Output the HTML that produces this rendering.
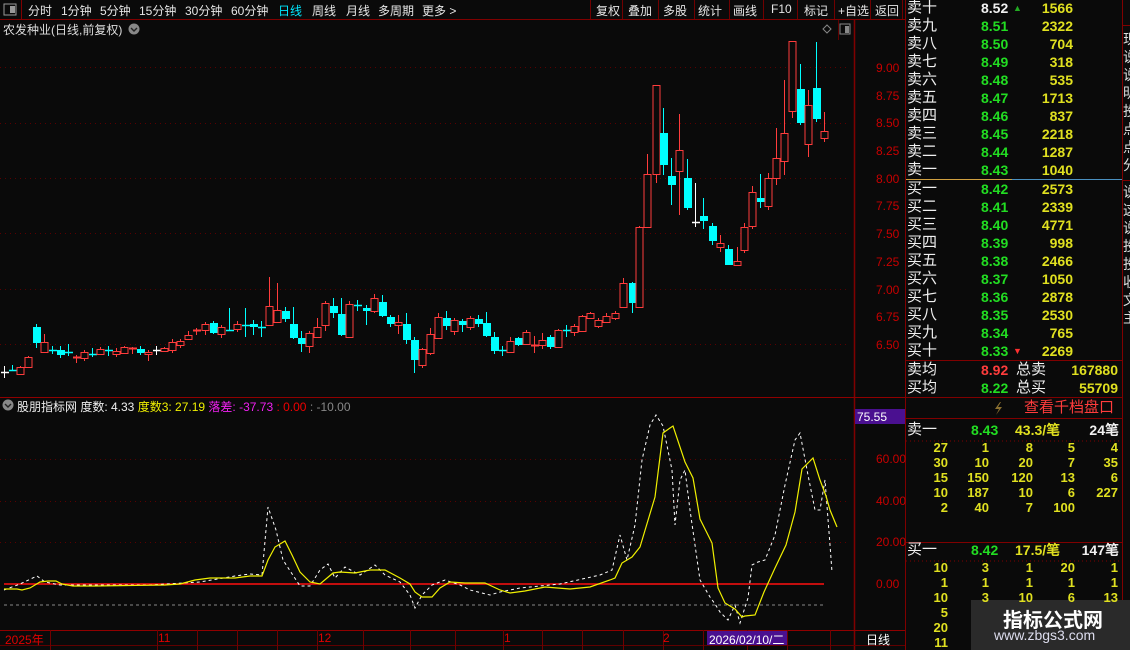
<!DOCTYPE html>
<html><head><meta charset="utf-8">
<style>
*{margin:0;padding:0;box-sizing:border-box}
body{width:1130px;height:650px;background:#0a0a0a;overflow:hidden;position:relative;font-family:"Liberation Sans","Noto Sans CJK SC",sans-serif;color:#ddd}
.a{position:absolute;white-space:nowrap}
.tb{font-size:12px;color:#e6e6e6;top:2px}
.rp{font-size:14px;line-height:18px}
.g{color:#22dd22}.y{color:#e0e020}.w{color:#f0f0f0}.r{color:#ff3c3c}
.ax{font-size:12px;color:#c80000;left:876px}
</style></head><body>
<svg class="a" style="left:0;top:0" width="1130" height="650" id="s">
<!-- frame lines -->
<line x1="0" y1="19.5" x2="905" y2="19.5" stroke="#800000"/>
<line x1="21.5" y1="0" x2="21.5" y2="19" stroke="#800000"/>
<line x1="854.5" y1="20" x2="854.5" y2="650" stroke="#800000" stroke-width="1.5"/>
<line x1="0" y1="397.5" x2="905" y2="397.5" stroke="#900000"/>
<line x1="0" y1="630.5" x2="905" y2="630.5" stroke="#900000"/>
<line x1="0" y1="645.5" x2="905" y2="645.5" stroke="#600000"/>
<line x1="905.5" y1="0" x2="905.5" y2="650" stroke="#800000"/>
<line x1="1122.5" y1="0" x2="1122.5" y2="650" stroke="#800000"/>
<line x1="838.5" y1="20" x2="838.5" y2="40" stroke="#600000"/>
<g stroke="#700000" id="tops"></g>
<!-- grids -->
<g stroke="#5a0000" stroke-dasharray="1,4" id="grid"></g>
<g id="candles"></g>
<line x1="4" y1="584" x2="824" y2="584" stroke="#ff1010" stroke-width="1.5"/>
<line x1="4" y1="605" x2="824" y2="605" stroke="#888" stroke-dasharray="3,3"/>
<polyline id="wl" fill="none" stroke="#fff" stroke-dasharray="3,3" stroke-width="1"/>
<polyline id="yl" fill="none" stroke="#f0f000" stroke-width="1.2"/>
<!-- right panel lines -->
<line x1="906" y1="179.5" x2="1012" y2="179.5" stroke="#d0a040"/>
<line x1="1012" y1="179.5" x2="1122" y2="179.5" stroke="#4a90c0"/>
<line x1="906" y1="360.5" x2="1122" y2="360.5" stroke="#800000"/>
<line x1="906" y1="397.5" x2="1122" y2="397.5" stroke="#800000"/>
<line x1="906" y1="418.5" x2="1122" y2="418.5" stroke="#800000"/>
<line x1="906" y1="441" x2="1122" y2="441" stroke="#800000" stroke-dasharray="1,3"/>
<line x1="906" y1="542.5" x2="1122" y2="542.5" stroke="#800000"/>
<line x1="906" y1="561" x2="1122" y2="561" stroke="#800000" stroke-dasharray="1,3"/>
<line x1="1122" y1="25.5" x2="1130" y2="25.5" stroke="#800000"/>
<line x1="1122" y1="180.5" x2="1130" y2="180.5" stroke="#800000"/>
<rect x="4" y="4" width="12" height="11" fill="none" stroke="#999"/><rect x="10" y="6" width="5" height="7" fill="#999"/>
<rect x="840" y="24" width="10" height="10" fill="none" stroke="#888"/><rect x="845" y="26" width="4" height="7" fill="#888"/>
<path d="M827 25 l4 4 l-4 4 l-4 -4z" fill="none" stroke="#888"/>
<circle cx="134" cy="29" r="5.5" fill="#888"/><path d="M131 28 l3 3 l3 -3" stroke="#222" fill="none" stroke-width="1.4"/>
<circle cx="8" cy="405" r="5.5" fill="#888"/><path d="M5 404 l3 3 l3 -3" stroke="#222" fill="none" stroke-width="1.4"/>
<rect x="855" y="409" width="50" height="15" fill="#4a1090"/>
<rect x="707" y="631" width="80" height="14" fill="#4a1090"/>
<path d="M1000 402 l-5 7 h4 l-3 6 l6 -8 h-4 l3 -5z" fill="#8a7030"/>
<rect x="971" y="600" width="159" height="50" fill="#2a2a2a"/>
</svg>

<div class="a tb" style="left:28px">分时</div>
<div class="a tb" style="left:61px">1分钟</div>
<div class="a tb" style="left:100px">5分钟</div>
<div class="a tb" style="left:139px">15分钟</div>
<div class="a tb" style="left:185px">30分钟</div>
<div class="a tb" style="left:231px">60分钟</div>
<div class="a tb" style="left:278px;color:#00e8ff">日线</div>
<div class="a tb" style="left:312px">周线</div>
<div class="a tb" style="left:346px">月线</div>
<div class="a tb" style="left:378px">多周期</div>
<div class="a tb" style="left:422px">更多 &gt;</div>
<div class="a tb" style="left:596px">复权</div>
<div class="a tb" style="left:628px">叠加</div>
<div class="a tb" style="left:663px">多股</div>
<div class="a tb" style="left:698px">统计</div>
<div class="a tb" style="left:733px">画线</div>
<div class="a tb" style="left:771px">F10</div>
<div class="a tb" style="left:804px">标记</div>
<div class="a tb" style="left:838px">+自选</div>
<div class="a tb" style="left:875px">返回</div>
<div class="a" style="left:3px;top:21px;font-size:12px;color:#ddd">农发种业(日线,前复权)</div>

<div class="a ax" style="top:61px">9.00</div>
<div class="a ax" style="top:89px">8.75</div>
<div class="a ax" style="top:116px">8.50</div>
<div class="a ax" style="top:144px">8.25</div>
<div class="a ax" style="top:172px">8.00</div>
<div class="a ax" style="top:199px">7.75</div>
<div class="a ax" style="top:227px">7.50</div>
<div class="a ax" style="top:255px">7.25</div>
<div class="a ax" style="top:283px">7.00</div>
<div class="a ax" style="top:310px">6.75</div>
<div class="a ax" style="top:338px">6.50</div>
<div class="a" style="left:857px;top:410px;font-size:12px;color:#fff">75.55</div>
<div class="a ax" style="top:452px">60.00</div>
<div class="a ax" style="top:494px">40.00</div>
<div class="a ax" style="top:535px">20.00</div>
<div class="a ax" style="top:577px">0.00</div>

<div class="a" style="left:17px;top:398px;font-size:12px"><span style="color:#eee">股朋指标网 度数: 4.33 </span><span style="color:#f0f000">度数3: 27.19 </span><span style="color:#f020f0">落差: -37.73 </span><span style="color:#f00000">: 0.00 </span><span style="color:#888">: -10.00</span></div>

<div class="a" style="left:5px;top:631px;font-size:12px;color:#e00000">2025年</div>
<div class="a" style="left:158px;top:631px;font-size:12px;color:#e00000">11</div>
<div class="a" style="left:318px;top:631px;font-size:12px;color:#e00000">12</div>
<div class="a" style="left:504px;top:631px;font-size:12px;color:#e00000">1</div>
<div class="a" style="left:663px;top:631px;font-size:12px;color:#e00000">2</div>
<div class="a" style="left:709px;top:631px;font-size:12px;color:#fff">2026/02/10/二</div>
<div class="a" style="left:866px;top:631px;font-size:12px;color:#fff">日线</div>

<div id="rp"></div>
<div class="a rp y" style="left:1123px;top:30px;width:7px;overflow:hidden;color:#ddd;line-height:18px;white-space:normal">现<br>说<br>说<br>明<br>投<br>点<br>点<br>分</div>
<div class="a rp" style="left:1123px;top:183px;width:7px;overflow:hidden;color:#ddd;line-height:18px;white-space:normal">说<br>这<br>说<br>投<br>投<br>收<br>文<br>主</div>

<div class="a" style="left:1003px;top:604px;font-size:20px;font-weight:bold;color:#fff">指标公式网</div>
<div class="a" style="left:994px;top:627px;font-size:14px;color:#dde">www.zbgs3.com</div>

<script>
var S='http://www.w3.org/2000/svg';
function el(p,t,a){var e=document.createElementNS(S,t);for(var k in a)e.setAttribute(k,a[k]);p.appendChild(e);return e;}
var g=document.getElementById('grid');
[67,123,178,233,289,344,459,501,542].forEach(function(y){el(g,'line',{x1:0,y1:y+.5,x2:850,y2:y+.5});});
var tp=document.getElementById('tops');
[590,622,658,694,729,763,797,834,870,902].forEach(function(x){el(tp,'line',{x1:x+.5,y1:0,x2:x+.5,y2:19});});
[50,157,197,237,277,317,363,410,455,503,542,582,623,663,703,747,787,830].forEach(function(x){el(tp,'line',{x1:x+.5,y1:630,x2:x+.5,y2:650});});
// candles: x, type(r red hollow, c cyan, w white, d red doji, e cyan doji), top, bottom, high, low
var C=[
[4,'w',372,372,366,378],[12,'e',370,370,365,371],[20,'r',367,374,366,375],[28,'r',357,367,356,368],
[36,'c',327,343,324,348],[44,'r',342,352,334,353],[52,'e',350,350,346,354],[60,'c',350,355,346,358],
[68,'e',352,352,344,356],[76,'d',357,358,355,363],[84,'r',352,358,350,361],[92,'e',354,354,348,357],
[100,'r',349,354,347,355],[108,'e',350,350,346,356],[116,'r',351,354,348,357],[124,'r',347,353,346,354],
[132,'d',348,349,347,354],[140,'c',349,353,346,355],[148,'r',352,354,350,361],[156,'w',350,350,346,355],
[164,'r',348,351,347,352],[172,'r',342,350,339,353],[180,'r',341,345,339,348],[188,'r',335,339,331,340],
[196,'d',330,331,328,335],[205,'r',324,330,322,335],[213,'c',323,333,321,334],[221,'r',327,334,325,338],
[229,'e',330,330,308,331],[237,'r',324,329,321,332],[245,'e',325,325,308,337],[253,'c',324,327,320,335],
[261,'e',327,327,321,337],[269,'r',306,325,277,326],[277,'r',310,322,283,323],[285,'c',311,319,307,322],
[293,'c',324,338,307,339],[301,'c',338,344,331,352],[309,'r',333,346,331,353],[317,'r',327,337,318,338],
[325,'r',303,325,301,331],[333,'c',306,313,298,318],[341,'c',314,335,298,336],[349,'r',304,337,301,338],
[357,'e',305,305,300,311],[366,'c',308,311,305,325],[374,'r',298,311,294,313],[382,'c',302,316,295,317],
[390,'c',317,324,315,327],[398,'r',322,325,315,334],[406,'c',324,340,313,344],[414,'c',340,360,337,373],
[422,'r',349,365,348,368],[430,'r',334,353,328,355],[438,'r',317,338,313,339],[446,'c',318,326,311,330],
[454,'r',320,331,318,335],[462,'c',321,325,319,332],[470,'r',318,327,316,330],[478,'c',319,324,315,327],
[486,'c',323,336,312,337],[494,'c',337,351,332,354],[502,'e',350,350,346,356],[510,'r',341,352,337,353],
[518,'c',338,345,337,346],[526,'r',332,344,330,345],[534,'d',345,346,336,353],[542,'r',340,345,333,349],
[550,'c',337,347,335,349],[558,'r',330,347,329,348],[566,'e',330,330,325,337],[574,'r',326,332,324,336],
[582,'r',316,331,315,332],[590,'r',313,318,312,319],[598,'r',320,326,318,328],[606,'r',316,322,313,323],
[615,'r',313,318,311,320],[623,'r',283,307,278,308],[632,'c',283,303,282,313],[639,'r',227,307,226,308],
[647,'r',174,227,154,228],[656,'r',85,174,85,183],[663,'c',133,165,108,175],[671,'c',176,185,158,205],
[679,'r',150,171,114,215],[687,'c',178,208,159,210],[695,'w',222,222,183,227],[703,'c',216,221,198,229],
[712,'c',226,241,223,245],[720,'r',243,247,235,252],[728,'c',249,265,245,265],[737,'r',261,265,247,266],
[744,'r',227,250,223,253],[752,'r',192,226,186,229],[760,'c',198,202,174,208],[768,'r',178,206,173,210],
[776,'r',158,178,128,185],[784,'r',133,161,80,175],[792,'r',41,111,41,118],[800,'c',89,123,64,125],
[808,'r',105,144,90,157],[816,'c',88,119,42,122],[824,'r',131,138,112,142]];
var cg=document.getElementById('candles');
C.forEach(function(c){var x=c[0],t=c[1],top=c[2],bot=c[3],hi=c[4],lo=c[5];
 var col=(t=='r'||t=='d')?'#ff3c3c':(t=='w'?'#ffffff':'#00ffff');
 el(cg,'line',{x1:x+.5,y1:hi,x2:x+.5,y2:lo,stroke:col});
 if(t=='r'){el(cg,'rect',{x:x-3,y:top+.5,width:7,height:Math.max(1,bot-top),fill:'#0a0a0a',stroke:col});}
 else if(t=='c'){el(cg,'rect',{x:x-3,y:top,width:8,height:Math.max(2,bot-top),fill:col});}
 else{el(cg,'line',{x1:x-3,y1:top+.5,x2:x+5,y2:top+.5,stroke:col,'stroke-width':(t=='d'?2:1.5)});}
});
document.getElementById('yl').setAttribute('points','4,589 17,589 22,590 30,588 40,582 48,581 56,581 62,584 73,586 95,586 165,585 180,584 195,580 210,578 235,578 250,576 262,576 268,560 275,547 285,541 292,555 300,572 310,582 320,584 333,573 340,572 355,573 370,570 385,570 400,578 410,584 415,592 422,597 432,597 440,588 450,582 465,583 485,583 500,590 510,593 525,591 545,587 570,589 590,587 610,580 615,578 622,563 632,557 640,547 655,497 663,433 670,428 673,426 685,462 693,478 700,519 707,533 712,543 718,588 725,603 735,609 742,617 745,616 755,615 764,592 775,568 786,545 795,512 802,469 810,461 813,458 820,480 826,496 830,510 837,527');
document.getElementById('wl').setAttribute('points','4,590 20,584 37,576 45,582 60,585 100,585 150,585 200,582 235,576 250,574 262,575 268,507 276,530 283,560 300,586 310,586 320,570 328,564 335,578 345,567 360,575 375,565 385,575 400,582 410,595 415,608 422,595 432,585 445,580 460,585 470,590 490,595 500,592 520,588 560,584 600,575 612,570 620,535 627,560 635,525 642,460 650,425 656,415 663,426 672,470 675,525 680,480 685,470 690,510 695,545 700,580 710,597 715,604 720,612 728,620 735,605 740,623 748,598 752,565 758,562 765,560 775,535 785,485 795,440 800,433 808,475 815,510 820,510 825,480 830,545 832,572');
// right panel
var rp=document.getElementById('rp');var h='';
var sell=[['卖十','8.52','1566'],['卖九','8.51','2322'],['卖八','8.50','704'],['卖七','8.49','318'],['卖六','8.48','535'],['卖五','8.47','1713'],['卖四','8.46','837'],['卖三','8.45','2218'],['卖二','8.44','1287'],['卖一','8.43','1040'],
['买一','8.42','2573'],['买二','8.41','2339'],['买三','8.40','4771'],['买四','8.39','998'],['买五','8.38','2466'],['买六','8.37','1050'],['买七','8.36','2878'],['买八','8.35','2530'],['买九','8.34','765'],['买十','8.33','2269']];
sell.forEach(function(r,i){var y=-1+i*18+(i>=10?1:0);
 h+='<div class="a rp w" style="left:907px;top:'+y+'px;font-size:15px">'+r[0]+'</div>';
 h+='<div class="a rp '+(i==0?'w':'g')+'" style="left:981px;top:'+y+'px;font-weight:bold">'+r[1]+'</div>';
 h+='<div class="a rp y" style="right:57px;top:'+y+'px;font-weight:bold">'+r[2]+'</div>';});
h+='<div class="a" style="left:1013px;top:3px;font-size:9px;color:#22aa22">▲</div>';
h+='<div class="a" style="left:1013px;top:346px;font-size:9px;color:#ff3030">▼</div>';
h+='<div class="a rp w" style="left:907px;top:361px;font-size:15px">卖均</div><div class="a rp r" style="left:981px;top:361px;font-weight:bold">8.92</div><div class="a rp w" style="left:1016px;top:361px;font-size:15px">总卖</div><div class="a rp y" style="right:12px;top:361px;font-weight:bold">167880</div>';
h+='<div class="a rp w" style="left:907px;top:379px;font-size:15px">买均</div><div class="a rp g" style="left:981px;top:379px;font-weight:bold">8.22</div><div class="a rp w" style="left:1016px;top:379px;font-size:15px">总买</div><div class="a rp y" style="right:12px;top:379px;font-weight:bold">55709</div>';
h+='<div class="a rp r" style="left:1024px;top:399px;font-size:15px">查看千档盘口</div>';
function blk(y,lab,p,avg,n,rows){
 h+='<div class="a rp w" style="left:907px;top:'+y+'px;font-size:15px">'+lab+'</div><div class="a rp g" style="left:971px;top:'+y+'px;font-weight:bold">'+p+'</div><div class="a rp y" style="left:1015px;top:'+y+'px;font-weight:bold">'+avg+'</div><div class="a rp w" style="right:11px;top:'+y+'px;font-weight:bold">'+n+'</div>';
 var cx=[948,989,1033,1075,1118];
 rows.forEach(function(r,i){r.forEach(function(v,j){if(v!=='')h+='<div class="a y" style="font-size:13px;font-weight:bold;top:'+(y+19+i*15)+'px;right:'+(1130-cx[j])+'px">'+v+'</div>';});});
}
blk(421,'卖一','8.43','43.3/笔','24笔',[[27,1,8,5,4],[30,10,20,7,35],[15,150,120,13,6],[10,187,10,6,227],[2,40,7,100,'']]);
blk(541,'买一','8.42','17.5/笔','147笔',[[10,3,1,20,1],[1,1,1,1,1],[10,3,10,6,13],[5,'','','',''],[20,'','','',''],[11,'','','','']]);
rp.innerHTML=h;
</script>
</body></html>
